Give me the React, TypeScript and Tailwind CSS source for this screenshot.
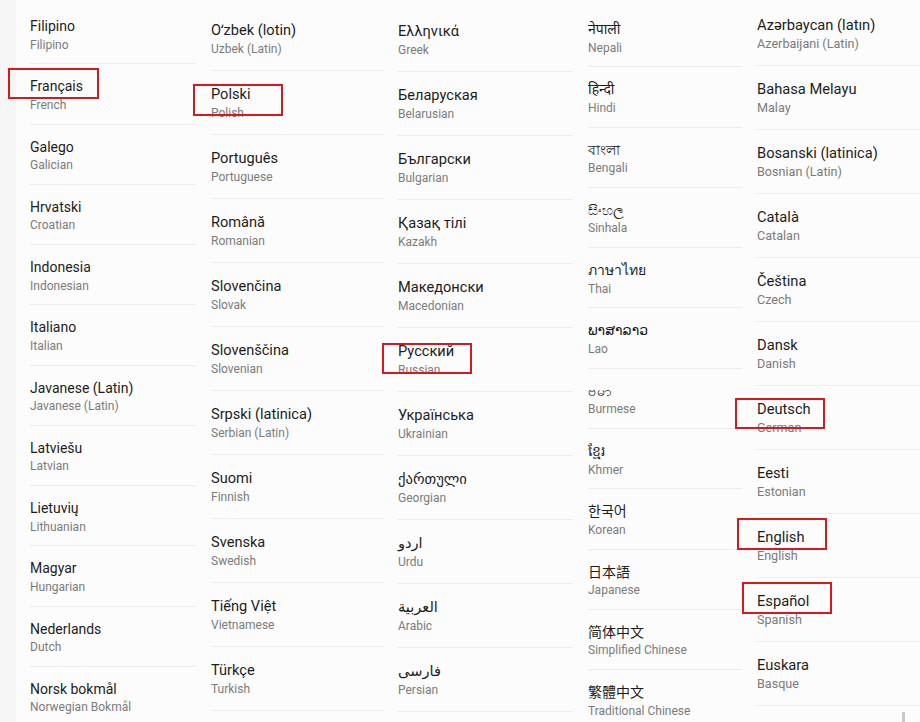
import React from "react";

type Lang = [string, string];

type Column = {
  width: string;
  pad: string;
  top: string;
  rowH: string;
  rowPad: string;
  title: string;
  sub: string;
  items: Lang[];
};

const columns: Column[] = [
  {
    width: "w-[196px]",
    pad: "pl-[14px]",
    top: "pt-[4px]",
    rowH: "h-[60.25px]",
    rowPad: "pt-[13px]",
    title: "text-[14px]",
    sub: "text-[12px]",
    items: [
      ["Filipino", "Filipino"],
      ["Français", "French"],
      ["Galego", "Galician"],
      ["Hrvatski", "Croatian"],
      ["Indonesia", "Indonesian"],
      ["Italiano", "Italian"],
      ["Javanese (Latin)", "Javanese (Latin)"],
      ["Latviešu", "Latvian"],
      ["Lietuvių", "Lithuanian"],
      ["Magyar", "Hungarian"],
      ["Nederlands", "Dutch"],
      ["Norsk bokmål", "Norwegian Bokmål"],
    ],
  },
  {
    width: "w-[187px]",
    pad: "pl-[15px]",
    top: "pt-[7px]",
    rowH: "h-[64px]",
    rowPad: "pt-[14px]",
    title: "text-[14.6px]",
    sub: "text-[12px]",
    items: [
      ["Oʻzbek (lotin)", "Uzbek (Latin)"],
      ["Polski", "Polish"],
      ["Português", "Portuguese"],
      ["Română", "Romanian"],
      ["Slovenčina", "Slovak"],
      ["Slovenščina", "Slovenian"],
      ["Srpski (latinica)", "Serbian (Latin)"],
      ["Suomi", "Finnish"],
      ["Svenska", "Swedish"],
      ["Tiếng Việt", "Vietnamese"],
      ["Türkçe", "Turkish"],
    ],
  },
  {
    width: "w-[190px]",
    pad: "pl-[15px]",
    top: "pt-[8px]",
    rowH: "h-[64px]",
    rowPad: "pt-[14px]",
    title: "text-[14.6px]",
    sub: "text-[12px]",
    items: [
      ["Ελληνικά", "Greek"],
      ["Беларуская", "Belarusian"],
      ["Български", "Bulgarian"],
      ["Қазақ тілі", "Kazakh"],
      ["Македонски", "Macedonian"],
      ["Русский", "Russian"],
      ["Українська", "Ukrainian"],
      ["ქართული", "Georgian"],
      ["اردو", "Urdu"],
      ["العربية", "Arabic"],
      ["فارسی", "Persian"],
    ],
  },
  {
    width: "w-[169px]",
    pad: "pl-[15px]",
    top: "pt-[7px]",
    rowH: "h-[60.3px]",
    rowPad: "pt-[13px]",
    title: "text-[14px]",
    sub: "text-[12px]",
    items: [
      ["नेपाली", "Nepali"],
      ["हिन्दी", "Hindi"],
      ["বাংলা", "Bengali"],
      ["සිංහල", "Sinhala"],
      ["ภาษาไทย", "Thai"],
      ["ພາສາລາວ", "Lao"],
      ["ဗမာ", "Burmese"],
      ["ខ្មែរ", "Khmer"],
      ["한국어", "Korean"],
      ["日本語", "Japanese"],
      ["简体中文", "Simplified Chinese"],
      ["繁體中文", "Traditional Chinese"],
    ],
  },
  {
    width: "w-[178px]",
    pad: "pl-[15px]",
    top: "pt-[2px]",
    rowH: "h-[64px]",
    rowPad: "pt-[14px]",
    title: "text-[14.7px]",
    sub: "text-[12.6px]",
    items: [
      ["Azərbaycan (latın)", "Azerbaijani (Latin)"],
      ["Bahasa Melayu", "Malay"],
      ["Bosanski (latinica)", "Bosnian (Latin)"],
      ["Català", "Catalan"],
      ["Čeština", "Czech"],
      ["Dansk", "Danish"],
      ["Deutsch", "German"],
      ["Eesti", "Estonian"],
      ["English", "English"],
      ["Español", "Spanish"],
      ["Euskara", "Basque"],
    ],
  },
];

// red highlight boxes drawn over the lists
const marks = [
  "left-[8px] top-[68px] w-[91px] h-[31px]",
  "left-[193px] top-[84px] w-[90px] h-[32px]",
  "left-[382px] top-[343px] w-[90px] h-[31px]",
  "left-[735px] top-[398px] w-[90px] h-[31px]",
  "left-[737px] top-[518px] w-[90px] h-[32px]",
  "left-[742px] top-[582px] w-[90px] h-[32px]",
];

function LangColumn({ col, first }: { col: Column; first?: boolean }) {
  return (
    <div className={`${col.width} h-full shrink-0 flex bg-[#fcfcfc]`}>
      {first && <div className="w-[16px] shrink-0 bg-[#f5f5f5]" />}
      <div className={`flex-1 flex flex-col ${col.top} ${col.pad}`}>
        {col.items.map(([name, en], i) => (
          <div key={i} className={`${col.rowH} ${col.rowPad} shrink-0 border-b border-[#ececec]`}>
            <div className={`${col.title} leading-[18px] text-[#1c1c1c] whitespace-nowrap`}>{name}</div>
            <div className={`${col.sub} leading-[18px] mt-[0.5px] text-[#7b7b7b] whitespace-nowrap`}>{en}</div>
          </div>
        ))}
      </div>
    </div>
  );
}

export default function App() {
  return (
    <div
      className="relative flex w-[920px] h-[722px] overflow-hidden bg-white"
      style={{ fontFamily: 'Roboto, "Noto Sans", "DejaVu Sans", "Noto Sans CJK SC", sans-serif' }}
    >
      {columns.map((col, i) => (
        <LangColumn key={i} col={col} first={i === 0} />
      ))}
      {marks.map((m, i) => (
        <div key={i} className={`absolute ${m} border-2 border-[#d41a1f]`} />
      ))}
      <div className="absolute left-[902px] top-[712px] w-[3px] h-[10px] bg-[#c9c9c9]" />
    </div>
  );
}
